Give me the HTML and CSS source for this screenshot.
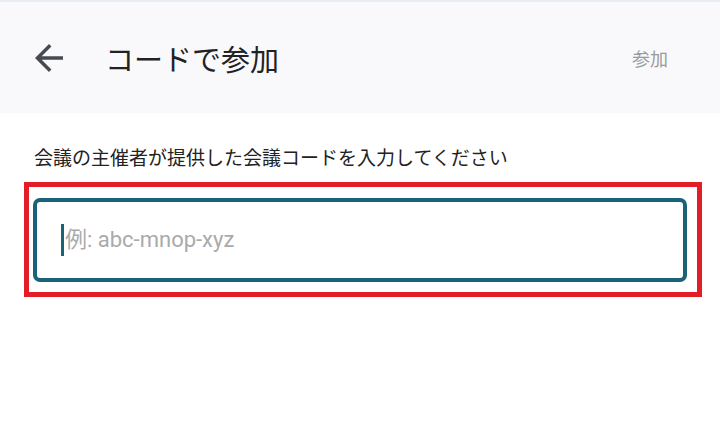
FILE: index.html
```html
<!DOCTYPE html>
<html lang="ja">
<head>
  <meta charset="UTF-8" />
  <meta name="viewport" content="width=device-width, initial-scale=1.0"/>
  <title>コードで参加</title>
  <link rel="stylesheet" href="styles.css">
</head>
<body>
  <header class="appbar">
    <button class="back-btn" aria-label="戻る">
      <svg viewBox="0 0 24 24" width="42" height="42">
        <path d="M20 11H7.83l5.59-5.59L12 4l-8 8 8 8 1.41-1.41L7.83 13H20v-2z" fill="currentColor"/>
      </svg>
    </button>
    <h1 class="appbar-title">コードで参加</h1>
    <span class="appbar-action">参加</span>
  </header>

  <main class="content">
    <p class="hint">会議の主催者が提供した会議コードを入力してください</p>
    <div class="highlight">
      <div class="code-field">
        <span class="caret"></span>
        <span class="placeholder">例: abc-mnop-xyz</span>
      </div>
    </div>
  </main>
</body>
</html>
```

FILE: styles.css
```css
* {
  box-sizing: border-box;
}

body {
  margin: 0;
  padding: 0;
  background: #ffffff;
  color: #222;
  font-family: Roboto, "Noto Sans CJK JP", sans-serif;
}

.appbar {
  height: 113px;
  display: flex;
  align-items: center;
  background: #f9f9fc;
  border-top: 2px solid #e7edf3;
  padding: 0 52px 0 28px;
}

.back-btn {
  width: 42px;
  height: 42px;
  padding: 0;
  border: none;
  background: none;
  color: #454b51;
  display: flex;
}

.appbar-title {
  margin: 0 0 0 35px;
  font-family: "Noto Sans CJK JP", sans-serif;
  font-size: 29px;
  font-weight: 400;
  color: #222;
  flex: 1;
}

.appbar-action {
  font-family: "Noto Sans CJK JP", sans-serif;
  font-size: 18px;
  color: #9a9a9a;
}

.content {
  padding-top: 31px;
}

.hint {
  margin: 0 0 12px 34px;
  font-family: "Noto Sans CJK JP", sans-serif;
  font-size: 19px;
  line-height: 26px;
  color: #222;
}

.highlight {
  margin: 0 18px 0 24px;
  border: 5px solid #e21d25;
  padding: 11px 10px 10px 4px;
}

.code-field {
  height: 84px;
  border: 4px solid #1a6277;
  border-radius: 7px;
  display: flex;
  align-items: center;
  padding-left: 24px;
}

.caret {
  width: 3px;
  height: 32px;
  background: #1a6277;
}

.placeholder {
  margin-left: 1px;
  font-size: 22px;
  line-height: 28px;
  color: #aaaaaa;
}
```
